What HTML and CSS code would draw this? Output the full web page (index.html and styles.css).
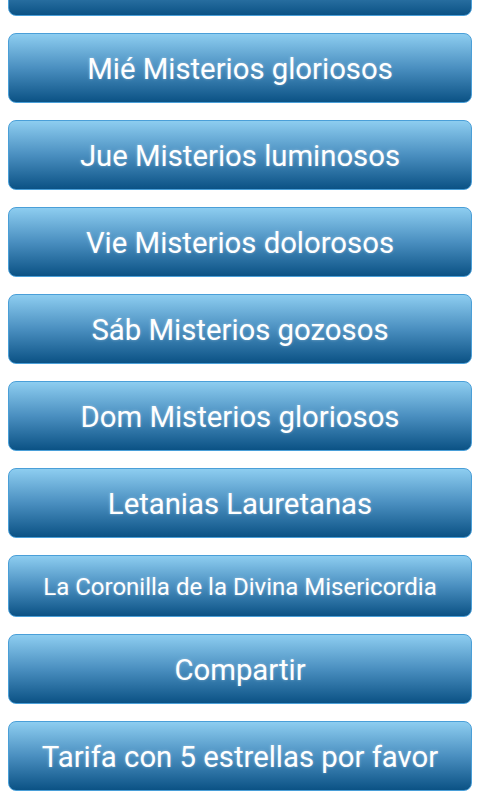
FILE: index.html
```html
<!DOCTYPE html>
<html lang="es">
<head>
    <meta charset="UTF-8">
    <meta name="viewport" content="width=device-width, initial-scale=1.0">
    <title>Santo Rosario</title>
    <link rel="stylesheet" href="styles.css">
</head>
<body>
    <div class="menu">
        <!-- botón anterior, desplazado fuera de la vista -->
        <button class="btn" aria-hidden="true"></button>
        <button class="btn">Mié Misterios gloriosos</button>
        <button class="btn">Jue Misterios luminosos</button>
        <button class="btn">Vie Misterios dolorosos</button>
        <button class="btn">Sáb Misterios gozosos</button>
        <button class="btn">Dom Misterios gloriosos</button>
        <button class="btn">Letanias Lauretanas</button>
        <button class="btn btn-small">La Coronilla de la Divina Misericordia</button>
        <button class="btn">Compartir</button>
        <button class="btn">Tarifa con 5 estrellas por favor</button>
    </div>
</body>
</html>
```

FILE: styles.css
```css
* {
    margin: 0;
    padding: 0;
    box-sizing: border-box;
}

body {
    background: #ffffff;
    font-family: Roboto, 'Noto Sans', sans-serif;
    overflow: hidden;
}

.menu {
    display: flex;
    flex-direction: column;
    gap: 17px;
    padding: 0 8px;
    margin-top: -54px;
}

.btn {
    width: 100%;
    height: 70px;
    padding-top: 2px;
    border: 1.5px solid #4a9fd8;
    border-radius: 8px;
    background: linear-gradient(to bottom, #8dcdf0 0%, #4a8fc0 50%, #0b5285 100%);
    color: #ffffff;
    font-family: Roboto, 'Noto Sans', sans-serif;
    font-weight: 400;
    font-size: 29.3px;
    text-shadow: 0 0 3px rgba(255, 255, 255, 0.35);
    cursor: pointer;
}

.btn-small {
    height: 62px;
    font-size: 24px;
}
```
